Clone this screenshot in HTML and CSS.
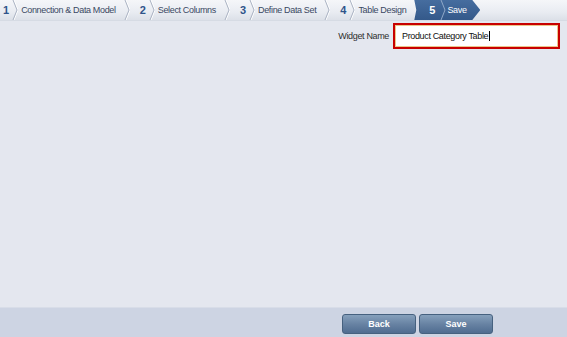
FILE: index.html
```html
<!DOCTYPE html>
<html>
<head>
<meta charset="utf-8">
<link rel="stylesheet" href="styles.css">
</head>
<body>
<div class="page">
  <nav class="steps">
    <div class="step first">
      <span class="num">1</span>
      <svg class="chev" width="6" height="20" viewBox="0 0 6 20"><polyline points="1,0 5,10 1,20" fill="none" stroke="#fff" stroke-width="1" transform="translate(1,0)"/><polyline points="1,0 5,10 1,20" fill="none" stroke="#aab3c3" stroke-width="1"/></svg>
      <span class="label">Connection &amp; Data Model</span>
      <svg class="chev tail" width="6" height="20" viewBox="0 0 6 20"><polyline points="1,0 5,10 1,20" fill="none" stroke="#fff" stroke-width="1" transform="translate(1,0)"/><polyline points="1,0 5,10 1,20" fill="none" stroke="#aab3c3" stroke-width="1"/></svg>
    </div>
    <div class="step">
      <span class="num">2</span>
      <svg class="chev" width="6" height="20" viewBox="0 0 6 20"><polyline points="1,0 5,10 1,20" fill="none" stroke="#fff" stroke-width="1" transform="translate(1,0)"/><polyline points="1,0 5,10 1,20" fill="none" stroke="#aab3c3" stroke-width="1"/></svg>
      <span class="label">Select Columns</span>
      <svg class="chev tail" width="6" height="20" viewBox="0 0 6 20"><polyline points="1,0 5,10 1,20" fill="none" stroke="#fff" stroke-width="1" transform="translate(1,0)"/><polyline points="1,0 5,10 1,20" fill="none" stroke="#aab3c3" stroke-width="1"/></svg>
    </div>
    <div class="step">
      <span class="num">3</span>
      <svg class="chev" width="6" height="20" viewBox="0 0 6 20"><polyline points="1,0 5,10 1,20" fill="none" stroke="#fff" stroke-width="1" transform="translate(1,0)"/><polyline points="1,0 5,10 1,20" fill="none" stroke="#aab3c3" stroke-width="1"/></svg>
      <span class="label">Define Data Set</span>
      <svg class="chev tail" width="6" height="20" viewBox="0 0 6 20"><polyline points="1,0 5,10 1,20" fill="none" stroke="#fff" stroke-width="1" transform="translate(1,0)"/><polyline points="1,0 5,10 1,20" fill="none" stroke="#aab3c3" stroke-width="1"/></svg>
    </div>
    <div class="step">
      <span class="num">4</span>
      <svg class="chev" width="6" height="20" viewBox="0 0 6 20"><polyline points="1,0 5,10 1,20" fill="none" stroke="#fff" stroke-width="1" transform="translate(1,0)"/><polyline points="1,0 5,10 1,20" fill="none" stroke="#aab3c3" stroke-width="1"/></svg>
      <span class="label">Table Design</span>
    </div>
    <div class="step active">
      <span class="num">5</span>
      <svg class="chev" width="6" height="20" viewBox="0 0 6 20"><polyline points="1,0 5,10 1,20" fill="none" stroke="#8fa8c8" stroke-width="1"/></svg>
      <span class="label">Save</span>
    </div>
  </nav>
  <main class="content">
    <div class="field">
      <label class="field-label">Widget Name</label>
      <div class="input">Product Category Table<span class="caret"></span></div>
    </div>
  </main>
  <footer class="footer">
    <button class="btn">Back</button>
    <button class="btn">Save</button>
  </footer>
</div>
</body>
</html>
```
FILE: styles.css
```css
* { box-sizing: border-box; }
html, body { margin: 0; padding: 0; }
body {
  font-family: "Liberation Sans", Arial, sans-serif;
  background: #e4e7ef;
}
.page {
  width: 567px;
  height: 337px;
  display: flex;
  flex-direction: column;
}
.steps {
  height: 21px;
  display: flex;
  align-items: stretch;
  background: linear-gradient(#f5f6f9, #e9ecf2 60%, #dce0e8);
  border-bottom: 1px solid #d6dbe4;
}
.step {
  display: flex;
  align-items: center;
  height: 20px;
}
.num {
  font-weight: bold;
  font-size: 11px;
  color: #2f548a;
  margin-left: 10px;
}
.step.first .num { margin-left: 3px; }
.chev { display: block; margin-left: 3px; }
.chev.tail { margin-left: 8px; }
.label {
  font-size: 9px;
  letter-spacing: -0.35px;
  color: #3a4862;
  margin-left: 3px;
}
.step.active {
  margin-left: 8px;
  width: 66px;
  padding-left: 15px;
  background: linear-gradient(#466d9f, #34598a);
  clip-path: polygon(0 0, 58px 0, 66px 10px, 58px 20px, 0 20px, 2px 10px);
}
.step.active .num { color: #fff; margin-left: 0; }
.step.active .chev { margin-left: 5px; }
.step.active .label { color: #fff; margin-left: 1px; }

.content {
  flex: 1;
  padding: 2px 7px 0 0;
}
.field {
  display: flex;
  justify-content: flex-end;
  align-items: center;
  gap: 4px;
}
.field-label {
  font-size: 9px;
  letter-spacing: -0.35px;
  color: #2e2e2e;
}
.input {
  width: 167px;
  height: 26px;
  border: 2px solid #c80000;
  background: #fff;
  box-shadow: inset 0 0 0 1px #ecc58a;
  font-size: 9px;
  letter-spacing: -0.35px;
  color: #111;
  padding-left: 7px;
  display: flex;
  align-items: center;
}
.caret {
  display: inline-block;
  width: 1px;
  height: 10px;
  background: #000;
  margin-left: 1px;
}
.footer {
  height: 30px;
  background: #cdd4e3;
  border-top: 1px solid #d8dde8;
  display: flex;
  justify-content: flex-end;
  align-items: flex-start;
  gap: 3px;
  padding: 6px 74px 0 0;
}
.btn {
  width: 74px;
  height: 20px;
  border: 1px solid #46617f;
  border-radius: 3px;
  background: linear-gradient(#86a0bc, #6883a3 50%, #4f6c90);
  color: #fff;
  font-family: "Liberation Sans", Arial, sans-serif;
  font-weight: bold;
  font-size: 9px;
  padding: 0;
}
```
